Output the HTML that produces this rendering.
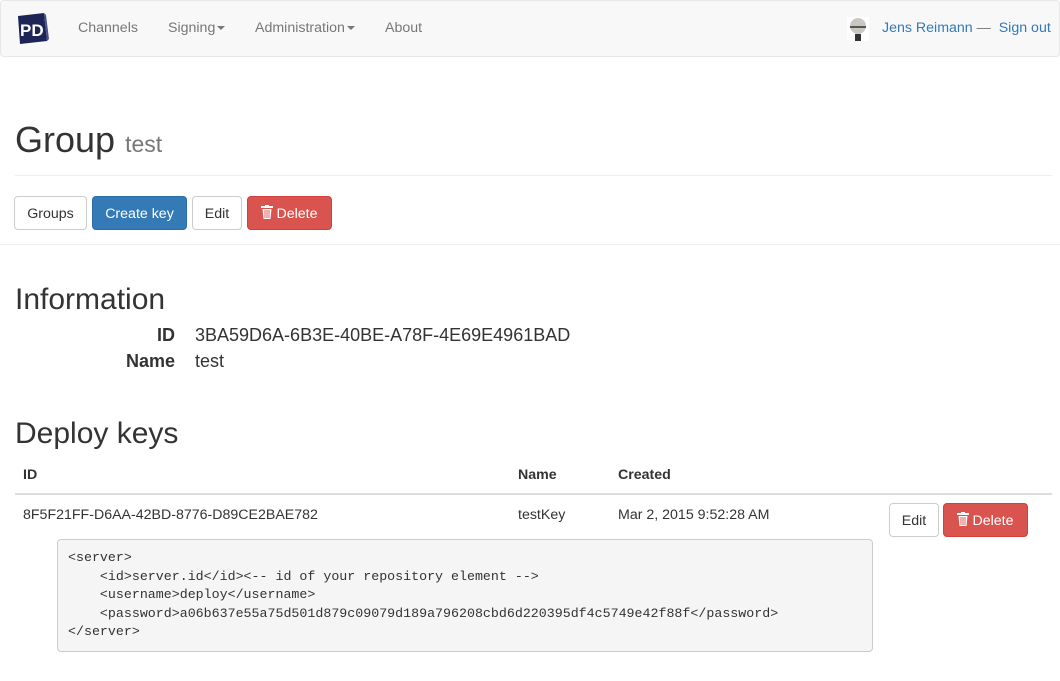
<!DOCTYPE html>
<html><head><meta charset="utf-8"><style>
*{box-sizing:border-box}
body{margin:0;width:1060px;height:681px;overflow:hidden;font-family:"Liberation Sans",sans-serif;font-size:14.2px;color:#333;background:#fff;position:relative}
.a{position:absolute;white-space:nowrap}
.nav{position:absolute;left:0;top:0;width:1060px;height:57px;background:#f8f8f8;border:1px solid #e7e7e7;border-radius:4px}
.nl{color:#777;top:20px}
.caret{display:inline-block;width:0;height:0;border-left:4px solid transparent;border-right:4px solid transparent;border-top:4px solid #777;vertical-align:middle;margin-left:2px}
.btn{position:absolute;height:34px;border:1px solid #ccc;border-radius:4px;line-height:34px;text-align:center;background:#fff;color:#333}
.blue{background:#337ab7;border-color:#2e6da4;color:#fff}
.red{background:#d9534f;border-color:#d43f3a;color:#fff}
.red svg{vertical-align:-1px;margin-right:3px}
pre{position:absolute;left:57px;top:539px;width:816px;height:113px;margin:0;background:#f5f5f5;border:1px solid #ccc;border-radius:4px;padding:9px 10px;font-family:"Liberation Mono",monospace;font-size:13.3px;line-height:18.6px;color:#333}
</style></head><body>
<div class="nav"></div>
<svg class="a" style="left:16px;top:12px" width="33" height="33" viewBox="0 0 33 33">
<polygon points="2,4 28,1 31,29 4,32" fill="#1d2556"/>
<polygon points="28,1 31,29 33,27 30,3" fill="#4a5387"/>
<text x="4" y="24" font-family="Liberation Sans" font-weight="bold" font-size="17" fill="#fff">PD</text>
</svg>
<div class="a nl" style="left:78px">Channels</div>
<div class="a nl" style="left:168px">Signing<span class="caret"></span></div>
<div class="a nl" style="left:255px">Administration<span class="caret"></span></div>
<div class="a nl" style="left:385px">About</div>
<svg class="a" style="left:847px;top:17px" width="22" height="24" viewBox="0 0 22 24">
<rect width="22" height="24" fill="#fff"/>
<ellipse cx="11" cy="9" rx="8" ry="8" fill="#c8c8c0"/>
<rect x="3" y="9" width="16" height="2" fill="#555"/>
<rect x="8" y="17" width="6" height="7" fill="#333"/>
</svg>
<div class="a" style="left:882px;top:20px;color:#337ab7">Jens Reimann <span style="color:#777">—</span>&nbsp; Sign out</div>

<div class="a" style="left:15px;top:120px;font-size:36px;line-height:40px">Group <span style="font-size:23px;color:#777">test</span></div>
<div class="a" style="left:15px;top:175px;width:1037px;border-top:1px solid #eee"></div>
<div class="btn" style="left:14px;top:196px;width:73px">Groups</div>
<div class="btn blue" style="left:92px;top:196px;width:95px">Create key</div>
<div class="btn" style="left:192px;top:196px;width:50px">Edit</div>
<div class="btn red" style="left:247px;top:196px;width:85px"><svg width="12" height="14" viewBox="0 0 12 14"><rect x="0" y="1" width="12" height="2" fill="#fff"/><rect x="4" y="0" width="4" height="2" fill="#fff"/><path d="M1.5 4h9l-1 10h-7z" fill="#fff"/><path d="M4 5v8M6 5v8M8 5v8" stroke="#d9534f" stroke-width="0.9"/></svg>Delete</div>
<div class="a" style="left:0;top:244px;width:1060px;border-top:1px solid #eee"></div>

<div class="a" style="left:15px;top:283px;font-size:30px;line-height:34px">Information</div>
<div class="a" style="left:15px;top:325px;width:160px;text-align:right;font-weight:bold;font-size:18px">ID</div>
<div class="a" style="left:195px;top:325px;font-size:18px">3BA59D6A-6B3E-40BE-A78F-4E69E4961BAD</div>
<div class="a" style="left:15px;top:351px;width:160px;text-align:right;font-weight:bold;font-size:18px">Name</div>
<div class="a" style="left:195px;top:351px;font-size:18px">test</div>

<div class="a" style="left:15px;top:417px;font-size:30px;line-height:34px">Deploy keys</div>
<div class="a" style="left:23px;top:467px;font-weight:bold">ID</div>
<div class="a" style="left:518px;top:467px;font-weight:bold">Name</div>
<div class="a" style="left:618px;top:467px;font-weight:bold">Created</div>
<div class="a" style="left:15px;top:493px;width:1037px;border-top:2px solid #ddd"></div>
<div class="a" style="left:23px;top:507px">8F5F21FF-D6AA-42BD-8776-D89CE2BAE782</div>
<div class="a" style="left:518px;top:507px">testKey</div>
<div class="a" style="left:618px;top:507px">Mar 2, 2015 9:52:28 AM</div>
<div class="btn" style="left:889px;top:503px;width:50px">Edit</div>
<div class="btn red" style="left:943px;top:503px;width:85px"><svg width="12" height="14" viewBox="0 0 12 14"><rect x="0" y="1" width="12" height="2" fill="#fff"/><rect x="4" y="0" width="4" height="2" fill="#fff"/><path d="M1.5 4h9l-1 10h-7z" fill="#fff"/><path d="M4 5v8M6 5v8M8 5v8" stroke="#d9534f" stroke-width="0.9"/></svg>Delete</div>
<pre>&lt;server&gt;
    &lt;id&gt;server.id&lt;/id&gt;&lt;-- id of your repository element --&gt;
    &lt;username&gt;deploy&lt;/username&gt;
    &lt;password&gt;a06b637e55a75d501d879c09079d189a796208cbd6d220395df4c5749e42f88f&lt;/password&gt;
&lt;/server&gt;</pre>
</body></html>
